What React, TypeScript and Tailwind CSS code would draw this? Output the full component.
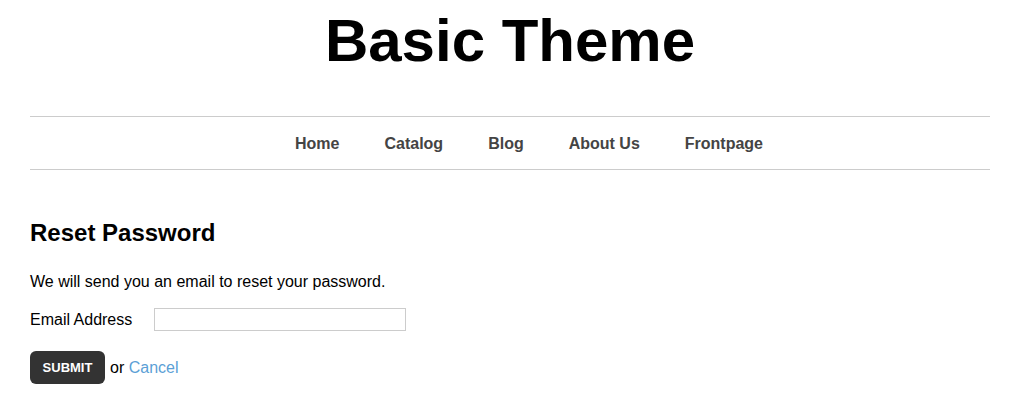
export default function App() {
  const nav = ["Home", "Catalog", "Blog", "About Us", "Frontpage"];
  return (
    <div className="min-h-[400px] bg-white text-black font-['Liberation_Sans',Arial,sans-serif]">
      <div className="ml-[30px] w-[960px]">
        <h1 className="pt-[11px] text-center text-[60px] font-bold leading-[60px]">Basic Theme</h1>
        <nav className="mt-[45px] flex h-[54px] items-center justify-center gap-[45px] border-y border-[#cccccc] pl-[38px] pt-[2px]">
          {nav.map((n) => (
            <a key={n} href="#" className="text-[16px] font-bold leading-[20px] text-[#444444]">
              {n}
            </a>
          ))}
        </nav>
        <h2 className="mt-[51px] text-[24px] font-bold leading-[24px]">Reset Password</h2>
        <p className="mt-[27px] text-[16px] leading-[20px]">We will send you an email to reset your password.</p>
        <div className="mt-[16px] flex items-center gap-[22px]">
          <label className="text-[16px] leading-[20px]">Email Address</label>
          <input className="h-[23px] w-[252px] border border-[#cccccc] bg-white outline-none" />
        </div>
        <div className="mt-[20px] flex items-center gap-[5px]">
          <button className="h-[33px] w-[75px] rounded-[6px] bg-[#333333] text-[13px] font-bold leading-[33px] text-white">
            SUBMIT
          </button>
          <span className="text-[16px] leading-[20px]">
            or <a href="#" className="text-[#5b9fd6]">Cancel</a>
          </span>
        </div>
      </div>
    </div>
  );
}
